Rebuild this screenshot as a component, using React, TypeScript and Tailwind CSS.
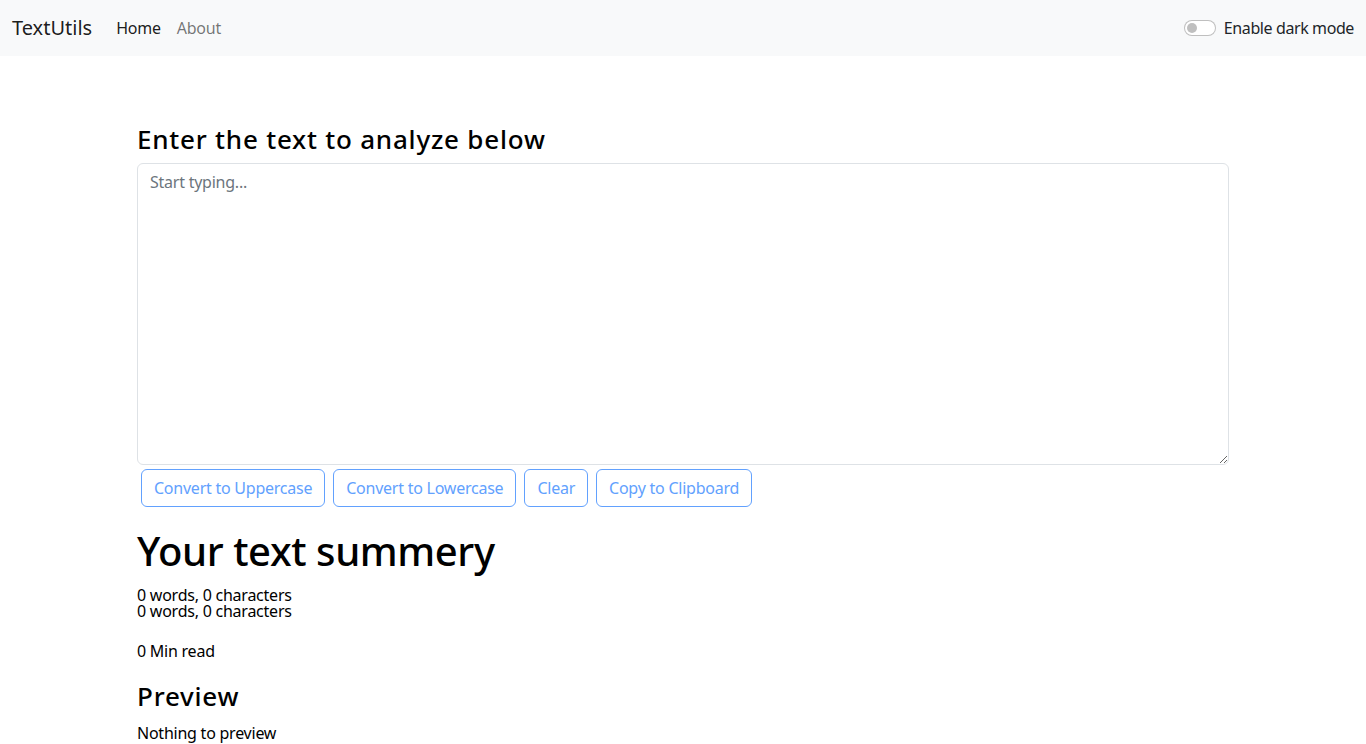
import { useState } from 'react'

export default function App() {
  const [text, setText] = useState('')
  const words = text.split(/\s+/).filter((w) => w.length > 0).length
  const chars = text.length

  return (
    <div className="min-h-screen bg-white text-[#212529] font-['Noto_Sans',sans-serif] text-base tracking-[-0.015em]">
      {/* Navbar */}
      <nav className="h-14 bg-[#f8f9fa] flex items-center justify-between px-3">
        <div className="flex items-center">
          <span className="text-xl text-black/90 mr-4 tracking-normal">TextUtils</span>
          <a className="px-2 text-black/90">Home</a>
          <a className="px-2 text-black/55">About</a>
        </div>
        <label className="flex items-center gap-2">
          <span className="w-8 h-4 rounded-full border border-black/25 bg-white flex items-center px-[2px]">
            <span className="w-[10px] h-[10px] rounded-full bg-[#bfbfbf]" />
          </span>
          <span className="tracking-[-0.025em]">Enable dark mode</span>
        </label>
      </nav>

      <div className="max-w-[1116px] mx-auto px-3">
        <div className="pt-[67px]">
          <h4 className="text-[26px] leading-8 font-medium text-black mb-2 tracking-[0.03em]">Enter the text to analyze below</h4>
          <textarea
            value={text}
            onChange={(e) => setText(e.target.value)}
            rows={12}
            placeholder="Start typing..."
            className="block w-full h-[302px] border border-[#dee2e6] rounded-md px-3 py-1.5 outline-none placeholder:text-[#6c757d]"
          />
          <div className="flex flex-wrap">
            {['Convert to Uppercase', 'Convert to Lowercase', 'Clear', 'Copy to Clipboard'].map((b) => (
              <button
                key={b}
                disabled
                className="mx-1 my-1 h-[38px] px-3 rounded-md border border-[#62a1fe] text-[#62a1fe] bg-white"
              >
                {b}
              </button>
            ))}
          </div>
        </div>

        <div className="mt-4 text-black">
          <h1 className="text-[40px] leading-12 font-medium mb-3 tracking-[-0.01em]">Your text summery</h1>
          <p className="leading-4">{words} words, {chars} characters</p>
          <p className="leading-4">{words} words, {chars} characters</p>
          <p className="leading-6 mt-5 mb-4">{Math.round(0.008 * words)} Min read</p>
          <h2 className="text-[26px] leading-[34px] font-medium mb-2 tracking-[0.03em]">Preview</h2>
          <p className="leading-6">{text.length > 0 ? text : 'Nothing to preview'}</p>
        </div>
      </div>
    </div>
  )
}
